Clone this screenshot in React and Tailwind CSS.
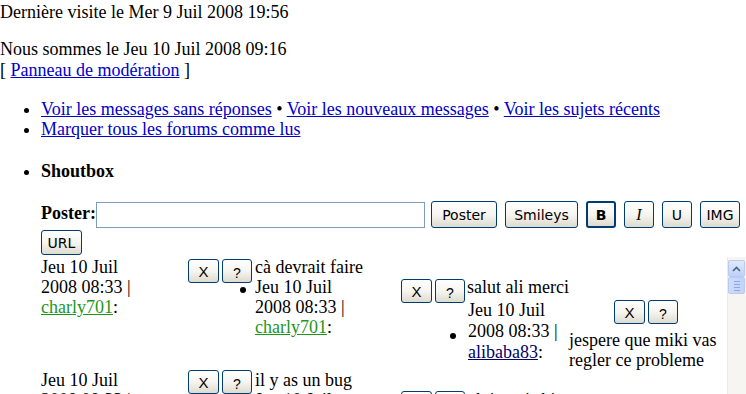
import clsx from "clsx";

// XP style push button
const XpButton = ({ children, className }) => (
	<button
		type="button"
		className={clsx(
			"box-border flex shrink-0 items-center justify-center rounded-[3px] border border-[#003c74] bg-linear-to-b from-white via-[#f6f5f0] to-[#dedbcf] font-['DejaVu_Sans',sans-serif] text-[14px] leading-none text-black",
			className
		)}
	>
		{children}
	</button>
);

const XQ = ({ className }) => (
	<div className={clsx("flex shrink-0 gap-[3px]", className)}>
		<XpButton className="h-[24px] w-[31px] font-['Liberation_Sans',sans-serif] text-[15px] text-[#333]">X</XpButton>
		<XpButton className="h-[24px] w-[30px] pt-[3px] font-['Liberation_Sans',sans-serif] text-[13px] text-[#333]">?</XpButton>
	</div>
);

const Bullet = ({ className }) => (
	<span className={clsx("block h-[6px] w-[6px] shrink-0 rounded-full bg-black", className)} />
);

const DateCol = ({ user, color, className }) => (
	<div className={clsx("shrink-0", className)}>
		<div>Jeu 10 Juil</div>
		<div>2008 08:33 |</div>
		<div>
			<a href="#" className={clsx("underline", color)}>{user}</a>:
		</div>
	</div>
);

const Scrollbar = () => (
	<div className="flex w-[19px] shrink-0 flex-col border-l border-[#ebeae4] bg-[#f6f5f1] pt-[3px]">
		<div className="flex h-[17px] w-[17px] items-center justify-center rounded-[2px] border border-[#b9cbf3] bg-linear-to-b from-[#e0e9fe] to-[#bfd0f9]">
			<svg width="9" height="6" viewBox="0 0 9 6">
				<path d="M1 5 L4.5 1.5 L8 5" fill="none" stroke="#4d6185" strokeWidth="1.6" />
			</svg>
		</div>
		<div className="flex h-[17px] w-[17px] flex-col items-center justify-center gap-[2px] rounded-[2px] border border-[#b9cbf3] bg-linear-to-r from-[#cddbfc] to-[#c3d3fa]">
			<span className="block h-px w-[6px] bg-[#8ca6e0]" />
			<span className="block h-px w-[6px] bg-[#8ca6e0]" />
			<span className="block h-px w-[6px] bg-[#8ca6e0]" />
			<span className="block h-px w-[6px] bg-[#8ca6e0]" />
		</div>
	</div>
);

const Shoutbox = () => (
	<div className="mt-[2px] flex h-[170px]">
		<div className="w-[686px] overflow-hidden">
			{/* first message */}
			<div className="flex items-start">
				<DateCol user="charly701" color="text-[#1e961e]" className="w-[147px]" />
				<div className="flex flex-col">
					<div className="flex h-[20px] items-start">
						<XQ className="mt-[2px]" />
						<span className="ml-[3px] whitespace-nowrap">cà devrait faire</span>
					</div>
					<div className="flex items-start">
						<Bullet className="ml-[52px] mt-[10px]" />
						<DateCol user="charly701" color="text-[#1e961e]" className="ml-[9px] w-[146px]" />
						<div className="flex flex-col">
							<div className="flex h-[23px] items-start">
								<XQ className="mt-[2px]" />
								<span className="ml-[2px] whitespace-nowrap">salut ali merci</span>
							</div>
							<div className="flex items-start">
								<Bullet className="ml-[49px] mt-[33px]" />
								<DateCol user="alibaba83" color="text-[#000066]" className="ml-[12px] w-[101px] leading-[21px]" />
								<div className="flex w-[150px] flex-col">
									<XQ className="ml-[45px]" />
									<div className="mt-[6px]">jespere que miki vas<br />regler ce probleme</div>
								</div>
							</div>
						</div>
					</div>
				</div>
			</div>

			{/* second message */}
			<div className="flex items-start">
				<DateCol user="charly701" color="text-[#1e961e]" className="w-[147px]" />
				<div className="flex flex-col">
					<div className="flex h-[20px] items-start">
						<XQ />
						<span className="ml-[3px] whitespace-nowrap">il y as un bug</span>
					</div>
					<div className="flex items-start">
						<Bullet className="ml-[52px] mt-[10px]" />
						<DateCol user="alibaba83" color="text-[#000066]" className="ml-[9px] w-[146px]" />
						<div className="flex flex-col">
							<div className="flex h-[23px] items-start">
								<XQ className="mt-[1px]" />
								<span className="ml-[2px] whitespace-nowrap">ok je vois bien</span>
							</div>
						</div>
					</div>
				</div>
			</div>
		</div>
		<Scrollbar />
	</div>
);

export default function App() {
	return (
		<div className="h-[394px] w-[746px] overflow-hidden bg-white font-['Liberation_Serif','Times_New_Roman',serif] text-[18px] leading-[20px] text-black">
			<div className="pt-[2px]">Dernière visite le Mer 9 Juil 2008 19:56</div>
			<div className="mt-[17px]">Nous sommes le Jeu 10 Juil 2008 09:16</div>
			<div className="mt-px">
				[ <a href="#" className="text-[#0000cc] underline">Panneau de modération</a> ]
			</div>

			<ul className="mt-[19px] list-disc pl-[41px]">
				<li>
					<a href="#" className="text-[#0000cc] underline">Voir les messages sans réponses</a>
					{" • "}
					<a href="#" className="text-[#0000cc] underline">Voir les nouveaux messages</a>
					{" • "}
					<a href="#" className="text-[#0000cc] underline">Voir les sujets récents</a>
				</li>
				<li>
					<a href="#" className="text-[#0000cc] underline">Marquer tous les forums comme lus</a>
				</li>
			</ul>

			<ul className="mt-[22px] list-disc pl-[41px]">
				<li>
					<span className="font-bold">Shoutbox</span>
					<div className="mt-[20px] flex h-[27px] items-start">
						<span className="mt-[2px] font-bold">Poster:</span>
						<input
							type="text"
							className="ml-0 mt-px h-[26px] w-[329px] border border-[#7f9db9] bg-white outline-none"
						/>
						<XpButton className="ml-[6px] h-[27px] w-[66px]">Poster</XpButton>
						<XpButton className="ml-[8px] h-[27px] w-[73px]">Smileys</XpButton>
						<XpButton className="ml-[8px] h-[27px] w-[30px] border-2 font-bold">B</XpButton>
						<XpButton className="ml-[8px] h-[27px] w-[30px] font-['Liberation_Serif',serif] text-[16px] italic">I</XpButton>
						<XpButton className="ml-[8px] h-[27px] w-[30px]">U</XpButton>
						<XpButton className="ml-[8px] h-[27px] w-[40px]">IMG</XpButton>
					</div>
					<XpButton className="mt-[2px] h-[25px] w-[41px]">URL</XpButton>
					<Shoutbox />
				</li>
			</ul>
		</div>
	);
}
